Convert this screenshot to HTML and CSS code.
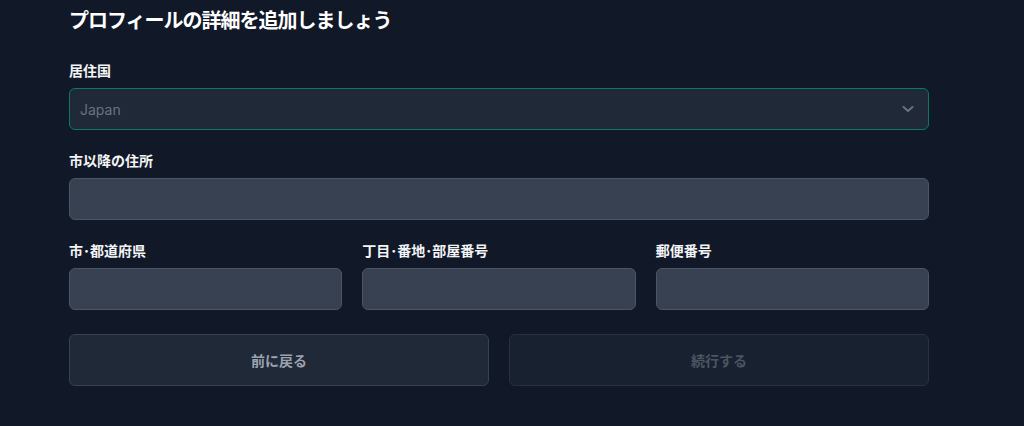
FILE: index.html
```html
<!DOCTYPE html>
<html lang="ja">
<head>
<meta charset="utf-8">
<link rel="stylesheet" href="styles.css">
</head>
<body>
<main class="page">
  <h1 class="title">プロフィールの詳細を追加しましょう</h1>
  <form class="form">
    <div class="field">
      <label class="label">居住国</label>
      <div class="select">
        <span class="select-value">Japan</span>
        <svg class="chevron" width="20" height="20" viewBox="0 0 20 20" fill="none"><path d="M5.5 8l4.5 4 4.5-4" stroke="#6b7280" stroke-width="2" stroke-linecap="round" stroke-linejoin="round"/></svg>
      </div>
    </div>
    <div class="field">
      <label class="label">市以降の住所</label>
      <div class="input"></div>
    </div>
    <div class="row">
      <div class="field">
        <label class="label">市･都道府県</label>
        <div class="input"></div>
      </div>
      <div class="field">
        <label class="label">丁目･番地･部屋番号</label>
        <div class="input"></div>
      </div>
      <div class="field">
        <label class="label">郵便番号</label>
        <div class="input"></div>
      </div>
    </div>
    <div class="actions">
      <button type="button" class="btn btn-back">前に戻る</button>
      <button type="button" class="btn btn-next" disabled>続行する</button>
    </div>
  </form>
</main>
</body>
</html>
```

FILE: styles.css
```css
html, body {
  margin: 0;
  padding: 0;
  background: #111827;
  height: 100%;
  overflow: hidden;
}
body {
  font-family: "Noto Sans CJK JP", "Noto Sans", sans-serif;
  color: #f3f4f6;
}
.page {
  width: 860px;
  margin-left: 69px;
  padding-top: 4px;
}
.title {
  margin: 0;
  font-size: 20px;
  line-height: 32px;
  font-weight: 700;
  letter-spacing: -1px;
  color: #ffffff;
}
.form {
  display: flex;
  flex-direction: column;
  gap: 20px;
  margin-top: 24px;
}
.field {
  display: flex;
  flex-direction: column;
  gap: 8px;
}
.label {
  font-size: 14px;
  line-height: 20px;
  font-weight: 700;
  color: #f3f4f6;
}
.select {
  height: 42px;
  box-sizing: border-box;
  border: 1px solid #0b7a5c;
  border-radius: 6px;
  background: #1f2937;
  display: flex;
  align-items: center;
  justify-content: space-between;
  padding: 0 10px 0 10px;
}
.select-value {
  font-family: "Inter", "Noto Sans", sans-serif;
  font-size: 14px;
  color: #6b7280;
}
.input {
  height: 42px;
  box-sizing: border-box;
  border: 1px solid #4b5563;
  border-radius: 6px;
  background: #374151;
}
.row {
  display: grid;
  grid-template-columns: 1fr 1fr 1fr;
  gap: 20px;
}
.actions {
  display: grid;
  grid-template-columns: 1fr 1fr;
  gap: 20px;
  margin-top: 4px;
}
.btn {
  height: 52px;
  border-radius: 6px;
  font-family: "Noto Sans CJK JP", sans-serif;
  font-size: 14px;
  font-weight: 700;
}
.btn-back {
  background: #1f2937;
  border: 1px solid #374151;
  color: #9ca3af;
}
.btn-next {
  background: #182130;
  border: 1px solid #263142;
  color: #4b5563;
}
```
